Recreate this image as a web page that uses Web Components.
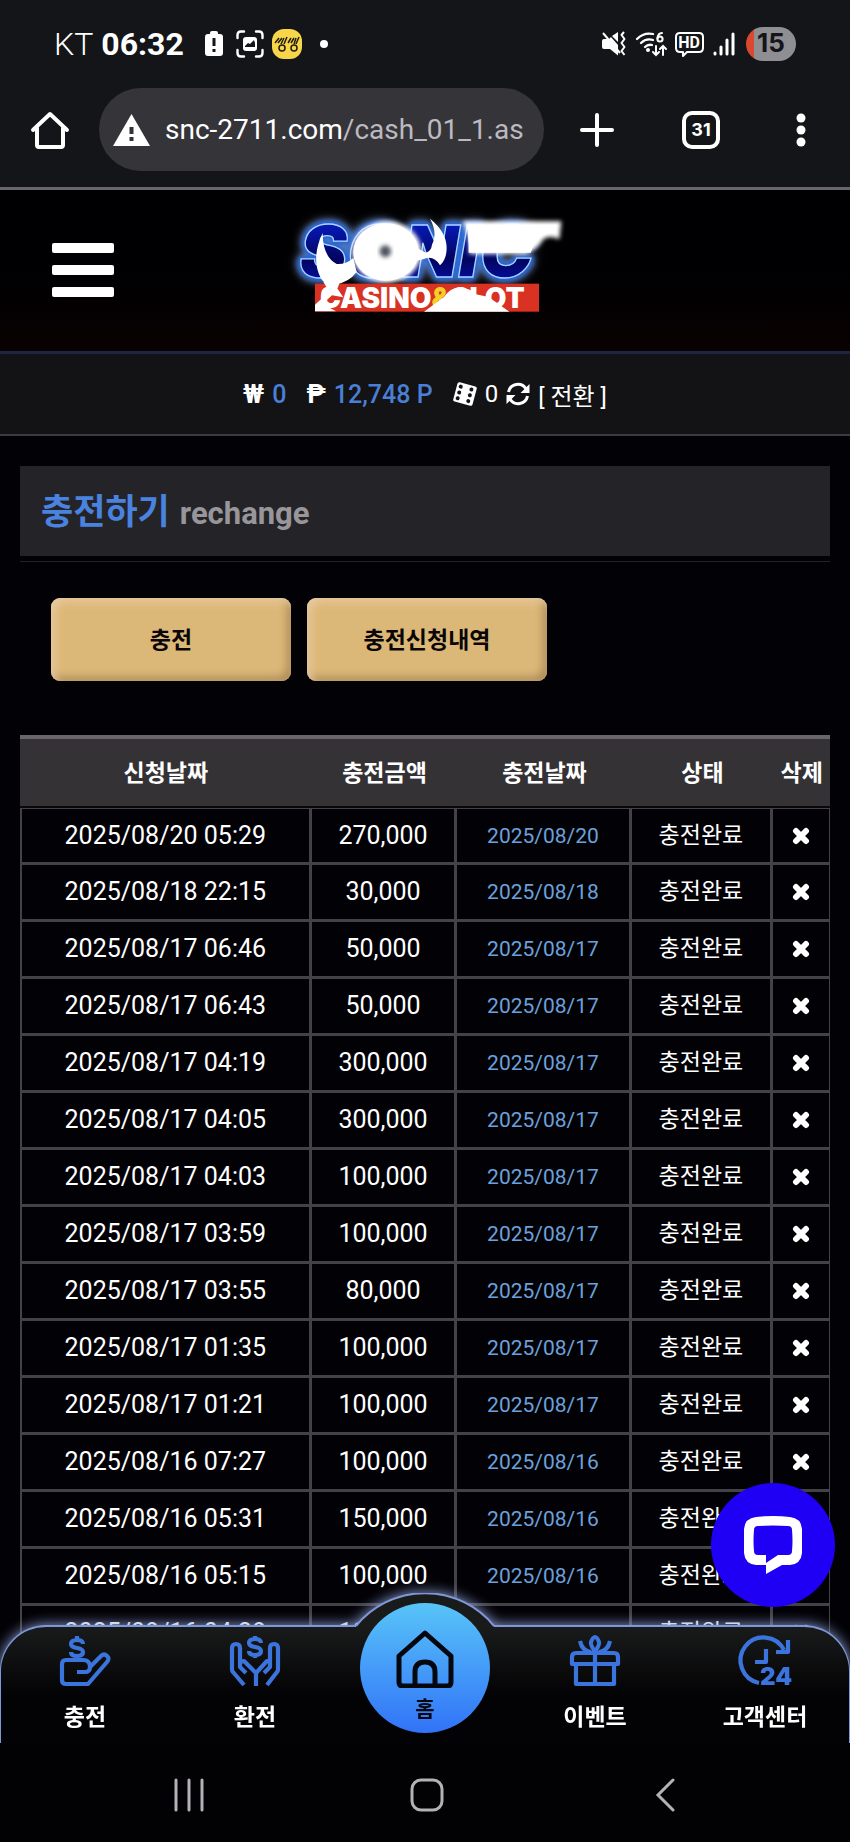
<!DOCTYPE html>
<html lang="ko">
<head>
<meta charset="utf-8">
<meta name="viewport" content="width=device-width, initial-scale=1">
<title>충전하기</title>
<style>
  html, body { margin: 0; height: 100%; background: #020105; }
  body {
    font-family: Roboto, "Noto Sans CJK KR", sans-serif;
    color: #fff;
    overflow: hidden;
  }
</style>
</head>
<body>
<phone-frame>
  <phone-status slot="top" carrier="KT" time="06:32" battery="15"></phone-status>
  <browser-bar slot="top" host="snc-2711.com" path="/cash_01_1.as" tabs="31"></browser-bar>

  <site-header></site-header>
  <wallet-bar cash="0" points="12,748 P" chips="0"></wallet-bar>
  <page-section>
    <page-title>충전하기<span slot="sub">rechange</span></page-title>
    <button-row>
      <gold-button>충전</gold-button>
      <gold-button>충전신청내역</gold-button>
    </button-row>
    <charge-table></charge-table>
  </page-section>

  <chat-bubble slot="overlay"></chat-bubble>
  <tab-bar slot="overlay">
    <tab-item icon="deposit">충전</tab-item>
    <tab-item icon="withdraw">환전</tab-item>
    <tab-item icon="home" featured>홈</tab-item>
    <tab-item icon="gift">이벤트</tab-item>
    <tab-item icon="support">고객센터</tab-item>
  </tab-bar>

  <system-nav slot="bottom"></system-nav>
</phone-frame>

<script>
/**
 * Small base class: every element renders its template once into an open root
 */
class BaseElement extends HTMLElement {
  connectedCallback() {
    if (this.shadowRoot) return;
    this.attachShadow({ mode: 'open' });
    this.shadowRoot.innerHTML = `
      <style>
        *, *::before, *::after { box-sizing: border-box; }
        :host { display: block; box-sizing: border-box; }
        svg { display: block; flex: none; }
        button {
          font: inherit;
          color: inherit;
          background: none;
          border: 0;
          padding: 0;
          margin: 0;
          cursor: pointer;
        }
        a { color: inherit; text-decoration: none; }
      </style>
      ${this.template()}
    `;
  }
}

/* Screen layout: fixed chrome on top and bottom, page in the middle */
class PhoneFrame extends BaseElement {
  template() {
    return `
      <style>
        :host { display: flex; flex-direction: column; height: 100vh; }
        .view { position: relative; flex: 1; min-height: 0; overflow: hidden; }
      </style>
      <slot name="top"></slot>
      <div class="view">
        <slot></slot>
        <slot name="overlay"></slot>
      </div>
      <slot name="bottom"></slot>
    `;
  }
}

class PhoneStatus extends BaseElement {
  template() {
    return `
      <style>
        :host {
          display: flex;
          justify-content: space-between;
          align-items: center;
          height: 88px;
          padding: 0 54px;
          background: #141519;
          font-size: 32px;
        }
        .group { display: flex; align-items: center; gap: 8px; }
        .carrier { font-weight: 300; }
        .time { font-weight: 700; }
        .battery {
          width: 50px;
          height: 34px;
          border-radius: 17px;
          background: linear-gradient(90deg, #d9482f 8px, #8f8e93 8px);
          color: #141519;
          font: 700 26px/32px Inter, sans-serif;
          text-align: center;
        }
      </style>
      <div class="group">
        <span class="carrier">${this.getAttribute('carrier')}</span>
        <span class="time">${this.getAttribute('time')}</span>
        <svg width="36" height="30" viewBox="0 0 36 30">
          <path fill="#fff" d="M18 5V4q0-2 2-2h4q2 0 2 2v1h2q3 0 3 3v16q0 3-3 3H16q-3 0-3-3V8q0-3 3-3z"/>
          <path stroke="#141519" stroke-width="3" d="M22 9v8M22 20v3"/>
        </svg>
        <svg width="28" height="28" viewBox="0 0 28 28" fill="none" stroke="#fff" stroke-width="2.4" stroke-linecap="round">
          <path d="M1.500 8V5q0-3.500 3.500-3.500h3M20 1.500h3q3.500 0 3.500 3.500v3M26.500 20v3q0 3.500-3.500 3.500h-3M8 26.500H5q-3.500 0-3.500-3.500v-3"/>
          <rect x="7" y="7" width="14" height="14" rx="3" fill="#fff" stroke="none"/>
          <path fill="#141519" stroke="none" d="M9 17v-1l3-3 2 1 4-4 1 3v4z"/>
        </svg>
        <svg width="30" height="30" viewBox="0 0 30 30" fill="none" stroke="#221d10" stroke-width="1.500">
          <rect width="30" height="30" rx="12" fill="#f7d64a" stroke="none"/>
          <circle cx="10" cy="19" r="3"/><circle cx="22" cy="19" r="3"/>
          <path d="M3 14l4-5M6 14l4-5M9 15l3-6M12 15l3-7M16 14l3-5M19 14l3-5M22 15l2-6M24 15l3-7"/>
        </svg>
        <svg width="28" height="28" viewBox="0 0 28 28"><circle cx="14" cy="14" r="4" fill="#fff"/></svg>
      </div>
      <div class="group">
        <svg width="27" height="28" viewBox="0 0 27 28">
          <path fill="#fff" d="M2 11q0-2 2-2h5l2-2 7 8v10.500L10 19H4q-2 0-2-2zM12 6l6-4v10z"/>
          <path stroke="#fff" stroke-width="2" d="M3 3l17 20"/>
          <path fill="none" stroke="#fff" stroke-width="2" stroke-linejoin="round" d="M24 2l-2.500 3 3 4-3 4 3 4-3 4 3 4"/>
        </svg>
        <svg width="32" height="28" viewBox="0 0 32 28" fill="none" stroke="#fff" stroke-width="2.300" stroke-linecap="round">
          <path d="M2 9Q9 2 18 4M6 13q5-5 12-3M10 17q3-3 7-2"/>
          <circle cx="13" cy="20" r="2" fill="#fff" stroke="none"/>
          <path stroke-width="2" d="M27 3q-4 0-4.500 5.500"/><circle cx="25" cy="9" r="2.600" stroke-width="2"/>
          <path stroke-width="2" d="M21 16v9M18 22l3 3 3-3M28 25v-9M25 19l3-3 3 3"/>
        </svg>
        <svg width="29" height="28" viewBox="0 0 29 28">
          <path fill="none" stroke="#fff" stroke-width="2" stroke-linejoin="round" d="M5 3h19q4 0 4 4v11q0 4-4 4H12l-4 4v-4H5q-4 0-4-4V7q0-4 4-4z"/>
          <text x="14" y="18" text-anchor="middle" fill="#fff" font-family="Roboto" font-weight="700" font-size="16">HD</text>
        </svg>
        <svg width="26" height="28" viewBox="0 0 26 28" stroke="#fff" stroke-width="3" stroke-linecap="round">
          <path d="M3 23v1M9 17v7M15 10v14M21 4v20"/>
        </svg>
        <span class="battery">${this.getAttribute('battery')}</span>
      </div>
    `;
  }
}

class BrowserBar extends BaseElement {
  template() {
    return `
      <style>
        :host {
          display: grid;
          grid-template-columns: 99px 1fr 106px 102px 98px;
          padding-bottom: 16px;
          background: #141519;
          border-bottom: 3px solid #69666b;
        }
        button { display: flex; align-items: center; justify-content: center; }
        .url {
          height: 83px;
          padding: 0 14px;
          gap: 15px;
          justify-content: flex-start;
          border-radius: 42px;
          background: #353439;
          font-size: 28px;
          white-space: nowrap;
        }
        .path { color: #bcbac0; }
        .count {
          width: 38px;
          height: 38px;
          border: 4px solid #fff;
          border-radius: 10px;
          font: 700 18px/30px Inter, sans-serif;
        }
      </style>
      <button aria-label="Home">
        <svg width="40" height="40" viewBox="0 0 40 40" fill="none" stroke="#fff" stroke-width="4" stroke-linejoin="round" stroke-linecap="round">
          <path d="M3 20L20 4l17 16M7 18v17q0 2 2 2h22q2 0 2-2V18"/>
        </svg>
      </button>
      <button class="url" aria-label="Address">
        <svg width="37" height="32" viewBox="0 0 37 32">
          <path fill="#fff" d="M18.500 0L37 32H0z"/>
          <path stroke="#353439" stroke-width="4" d="M18.500 13v7M18.500 23v4"/>
        </svg>
        <span>${this.getAttribute('host')}<span class="path">${this.getAttribute('path')}</span></span>
      </button>
      <button aria-label="New tab">
        <svg width="34" height="34" viewBox="0 0 34 34" stroke="#fff" stroke-width="4" stroke-linecap="round">
          <path d="M17 2v30M2 17h30"/>
        </svg>
      </button>
      <button aria-label="Tabs"><span class="count">${this.getAttribute('tabs')}</span></button>
      <button aria-label="Menu">
        <svg width="10" height="34" viewBox="0 0 10 34" fill="#fff">
          <circle cx="5" cy="5" r="4.500"/><circle cx="5" cy="17" r="4.500"/><circle cx="5" cy="29" r="4.500"/>
        </svg>
      </button>
    `;
  }
}

class SiteHeader extends BaseElement {
  template() {
    return `
      <style>
        :host {
          display: grid;
          grid-template-columns: 1fr auto 1fr;
          align-items: center;
          height: 164px;
          padding: 0 52px 2px;
          background: linear-gradient(#000002 50%, #090102);
          border-bottom: 3px solid #1d2445;
        }
        .menu { display: grid; gap: 12px; width: 62px; }
        .menu i { height: 10px; border-radius: 2px; background: #fff; }
        svg text { font-family: Inter, sans-serif; font-weight: 900; }
        .brand {
          filter: drop-shadow(0 0 5px #2a6be0) drop-shadow(0 0 6px #1f5fce)
            drop-shadow(0 0 8px #1f5fce) drop-shadow(0 0 12px #8ea6dd);
        }
      </style>
      <button class="menu" aria-label="Menu"><i></i><i></i><i></i></button>
      <a href="#" aria-label="Sonic Casino and Slot">
        <svg width="310" height="130" viewBox="0 31 930 390">
          <defs>
            <filter id="soft" x="-20%" y="-40%" width="140%" height="180%"><feGaussianBlur stdDeviation="7"/></filter>
            <linearGradient id="blue" x2="0" y2="1">
              <stop offset=".2" stop-color="#0719b8"/><stop offset=".6" stop-color="#02045e"/><stop offset="1" stop-color="#0714c8"/>
            </linearGradient>
          </defs>
          <text class="brand" x="88" y="248" font-size="216" font-style="italic" fill="url(#blue)" stroke="#a9d4ff" stroke-width="4">SONIC</text>
          <!-- white ring and claw highlights -->
          <ellipse cx="350" cy="172" rx="104" ry="92" fill="#fff" filter="url(#soft)"/>
          <ellipse cx="348" cy="172" rx="98" ry="86" fill="#fff"/>
          <ellipse cx="346" cy="170" rx="17" ry="18" fill="#50545f" filter="url(#soft)"/>
          <path fill="#fff" d="M158 115Q122 190 152 250q12 22 42 20 42-6 66-38l-10-42q-22 20-50 18-42-22-42-93z"/>
          <path fill="#fff" d="M440 160l28 14q16-6 18-24 18-34-6-78 50 40 50 88 0 34-20 52-18-30-46-20l-28 8z"/>
          <path fill="#fff" filter="url(#soft)" d="M578 80H874l-6 54q-30-14-48 0-18 30-52 44H598q2-50-20-98z"/>
          <path fill="#fff" d="M590 90H860q0 16-8 24-50 0-70 60H596q0-50-6-84z"/>
          <rect x="135" y="267" width="672" height="84" fill="#d93223"/>
          <text x="150" y="341" font-size="84" fill="#fff">CASINO<tspan fill="#f5ce28">&amp;</tspan>SLOT</text>
          <path fill="#fff" d="M160 262h50l-8 20 18 26-34-6-28 26 40 22h-63v-20l22-20q-10-26 12-34zM462 351l60-44q18-28 46-28 34 0 50 20l38 8 62 44z"/>
        </svg>
      </a>
    `;
  }
}

class WalletBar extends BaseElement {
  template() {
    return `
      <style>
        :host {
          display: flex;
          align-items: center;
          justify-content: center;
          gap: 8px;
          height: 82px;
          background: #131214;
          border-bottom: 2px solid #3d3b40;
          font-size: 24px;
        }
        b { color: #4a7fd6; font-size: 25px; font-weight: 500; margin-right: 12px; }
        .sign { font-size: 26px; font-weight: 700; }
      </style>
      <span class="sign">₩</span><b>${this.getAttribute('cash')}</b>
      <span class="sign">₱</span><b>${this.getAttribute('points')}</b>
      <svg width="24" height="24" viewBox="0 0 24 24">
        <g transform="rotate(15 12 12)">
          <rect x="2" y="2" width="20" height="20" rx="2" fill="#fff"/>
          <g fill="#131214"><circle cx="6" cy="6" r="2"/><circle cx="6" cy="12" r="2"/><circle cx="6" cy="18" r="2"/>
          <circle cx="17" cy="6" r="2"/><circle cx="17" cy="12" r="2"/><circle cx="17" cy="18" r="2"/></g>
        </g>
      </svg>
      <span>${this.getAttribute('chips')}</span>
      <svg width="24" height="24" viewBox="0 0 24 24" fill="none" stroke="#fff" stroke-width="3">
        <path d="M2.500 10A9.500 9.500 0 0 1 20 7M21.500 14A9.500 9.500 0 0 1 4 17"/>
        <path fill="#fff" stroke="none" d="M23.500 2v9h-9zM.5 22v-9h9z"/>
      </svg>
      <a href="#">[ 전환 ]</a>
    `;
  }
}

class PageSection extends BaseElement {
  template() {
    return `
      <style>:host { padding: 30px 20px 0; }</style>
      <slot></slot>
    `;
  }
}

class PageTitle extends BaseElement {
  template() {
    return `
      <style>
        :host { border-bottom: 1px solid #222125; padding-bottom: 5px; }
        h1 {
          display: flex;
          align-items: baseline;
          gap: 10px;
          height: 90px;
          margin: 0;
          padding: 4px 21px 0;
          background: #242327;
          color: #4a82df;
          font-size: 35px;
          line-height: 86px;
          font-weight: 700;
        }
        ::slotted(span) { color: #98969a; font-size: 31px; }
      </style>
      <h1><slot></slot><slot name="sub"></slot></h1>
    `;
  }
}

class ButtonRow extends BaseElement {
  template() {
    return `
      <style>
        :host { display: flex; gap: 16px; padding: 36px 31px 54px; }
      </style>
      <slot></slot>
    `;
  }
}

class GoldButton extends BaseElement {
  template() {
    return `
      <style>
        button {
          width: 240px;
          height: 83px;
          padding-bottom: 4px;
          border-radius: 9px;
          background: #dcb878;
          box-shadow: inset 4px 4px 8px #e9c9a0, inset -4px -4px 8px #a98a58;
          color: #0a0606;
          font-size: 23px;
          font-weight: 700;
        }
      </style>
      <button><slot></slot></button>
    `;
  }
}

/* Deposit history: [requested at, amount, paid on] */
const CHARGES = [
  ['2025/08/20 05:29', '270,000', '2025/08/20'],
  ['2025/08/18 22:15', '30,000', '2025/08/18'],
  ['2025/08/17 06:46', '50,000', '2025/08/17'],
  ['2025/08/17 06:43', '50,000', '2025/08/17'],
  ['2025/08/17 04:19', '300,000', '2025/08/17'],
  ['2025/08/17 04:05', '300,000', '2025/08/17'],
  ['2025/08/17 04:03', '100,000', '2025/08/17'],
  ['2025/08/17 03:59', '100,000', '2025/08/17'],
  ['2025/08/17 03:55', '80,000', '2025/08/17'],
  ['2025/08/17 01:35', '100,000', '2025/08/17'],
  ['2025/08/17 01:21', '100,000', '2025/08/17'],
  ['2025/08/16 07:27', '100,000', '2025/08/16'],
  ['2025/08/16 05:31', '150,000', '2025/08/16'],
  ['2025/08/16 05:15', '100,000', '2025/08/16'],
  ['2025/08/16 04:28', '100,000', '2025/08/16']
];

class ChargeTable extends BaseElement {
  template() {
    const rows = CHARGES.map(([requested, amount, paid]) => `
      <tr>
        <td>${requested}</td>
        <td>${amount}</td>
        <td class="paid">${paid}</td>
        <td class="state">충전완료</td>
        <td>
          <button aria-label="삭제">
            <svg width="18" height="18" viewBox="0 0 18 18" stroke="#fff" stroke-width="6" stroke-linecap="round">
              <path d="M4 4l10 10M14 4L4 14"/>
            </svg>
          </button>
        </td>
      </tr>
    `).join('');

    return `
      <style>
        table {
          width: 100%;
          table-layout: fixed;
          border-collapse: separate;
          border-spacing: 0;
          text-align: center;
          white-space: nowrap;
        }
        th {
          height: 73px;
          padding: 0 0 4px;
          background: #353236;
          border-top: 4px solid #69656a;
          border-bottom: 2px solid #0a080b;
          font-size: 23px;
          font-weight: 700;
        }
        td {
          height: 57px;
          padding: 0;
          border: solid #444246;
          border-width: 0 3px 3px 0;
          font-size: 25px;
          line-height: 30px;
        }
        td:first-child { border-left-width: 2px; }
        td:last-child { border-right-width: 1px; }
        tbody tr:first-child td { border-top-width: 1px; }
        .paid { color: #6ba1dc; font-size: 21px; }
        .state { font-size: 23px; }
        button { display: block; margin: 0 auto; }
      </style>
      <table>
        <colgroup>
          <col style="width: 36%"><col style="width: 18%"><col style="width: 21.500%">
          <col style="width: 17.500%"><col style="width: 7%">
        </colgroup>
        <thead>
          <tr><th>신청날짜</th><th>충전금액</th><th>충전날짜</th><th>상태</th><th>삭제</th></tr>
        </thead>
        <tbody>${rows}</tbody>
      </table>
    `;
  }
}

class ChatBubble extends BaseElement {
  template() {
    return `
      <style>
        :host { position: absolute; right: 15px; bottom: 136px; z-index: 1; }
        button {
          display: grid;
          place-items: center;
          width: 124px;
          height: 124px;
          border-radius: 50%;
          background: #2000f5;
        }
      </style>
      <button aria-label="Chat">
        <svg width="58" height="58" viewBox="0 0 58 58">
          <path fill="#fff" fill-rule="evenodd" d="M12 1Q29-1 46 1q11 1 12 12 1 12 0 24-1 11-12 12h-8L22 58V49H12Q1 48 0 37-1 25 0 13 1 2 12 1zM14 10q-4 0-4 4-1 11 0 21 0 4 4 4h8v8l12-8h10q4 0 4-4 1-10 0-21 0-4-4-4-15-1-30 0z"/>
        </svg>
      </button>
    `;
  }
}

class TabBar extends BaseElement {
  template() {
    return `
      <style>
        :host { position: absolute; left: 0; right: 0; bottom: 0; }
        .shape { filter: drop-shadow(0 0 7px #8fa3dc); position: absolute; inset: 0; }
        .bar {
          height: 100%;
          border: 2px solid #7f97d8;
          border-width: 2px 1px 0;
          border-radius: 46px 46px 0 0;
          background: linear-gradient(#191b1b, #030204 60%);
        }
        .bump { position: absolute; left: 50%; top: -32px; margin-left: -70px; }
        nav {
          position: relative;
          display: grid;
          grid-template-columns: repeat(5, 1fr);
          height: 118px;
        }
      </style>
      <div class="shape">
        <div class="bar"></div>
        <svg class="bump" width="140" height="35" viewBox="0 0 140 35">
          <path fill="#191b1b" d="M1 33A89 89 0 0 1 139 33V35H1z"/>
          <path fill="none" stroke="#7f97d8" stroke-width="2" d="M1 33A89 89 0 0 1 139 33"/>
        </svg>
      </div>
      <nav><slot></slot></nav>
    `;
  }
}

const TAB_ICONS = {
  deposit: `
    <path d="M6 24q-4 0-4 4v16q0 4 4 4h22L47 26q3-4 0-6-3-3-6 0L30 31q0-7-7-7zM17 36h8q5 0 5-5"/>
    <path d="M23 8q0-4-6-4t-6 4q0 3 6 4t6 4q0 4-6 4t-6-4M17 0v4M17 20v4"/>`,
  withdraw: `
    <path d="M14 49L3 36Q2 35 2 33V12q0-4 4-4t4 4v14l4-1 12 12v13M10 26v5l6 6"/>
    <path d="M37 49l10-13q1-1 1-3V12q0-4-4-4t-4 4v14l-3-1-11 12M40 26v5l-6 6"/>
    <path d="M31 7q0-4-6-4t-6 4q0 3 6 4t6 4q0 4-6 4t-6-4M25 0v3M25 19v3"/>`,
  gift: `
    <path d="M6 29v19h38V29M2 28v-7q0-4 4-4h38q4 0 4 4v7zM25 17v31"/>
    <path d="M25 16q-5-8-4-10 2-5 4-5t4 5q1 2-4 10M10 5q2 10 11 11M40 5q-2 10-11 11"/>`,
  support: `
    <path d="M19 47A23 23 0 1 1 44 14M48 4v12H36M26 13v13H15"/>`
};

class TabItem extends BaseElement {
  template() {
    if (this.hasAttribute('featured')) return this.featured();

    // the 24h icon carries its own number
    const badge = this.getAttribute('icon') === 'support'
      ? '<text x="52" y="49" text-anchor="end" stroke="none" fill="#3b74dd" font-family="Inter" font-weight="900" font-size="24">24</text>'
      : '';
    return `
      <style>
        a {
          display: flex;
          flex-direction: column;
          align-items: center;
          gap: 16px;
          padding-top: 11px;
          font-size: 23px;
          line-height: 32px;
          font-weight: 700;
          white-space: nowrap;
        }
        svg { overflow: visible; }
      </style>
      <a href="#">
        <svg width="50" height="50" viewBox="0 0 50 50" fill="none" stroke="#3b74dd" stroke-width="4.200" stroke-linejoin="round">
          ${TAB_ICONS[this.getAttribute('icon')]}${badge}
        </svg>
        <span><slot></slot></span>
      </a>
    `;
  }

  featured() {
    return `
      <style>
        :host { position: relative; }
        a {
          position: absolute;
          left: 50%;
          top: -22px;
          width: 130px;
          height: 130px;
          margin-left: -65px;
          padding-top: 27px;
          display: flex;
          flex-direction: column;
          align-items: center;
          gap: 6px;
          border-radius: 50%;
          background: linear-gradient(#58c4f8, #3173f8);
          color: #05070f;
          font-size: 21px;
          line-height: 30px;
          font-weight: 700;
        }
      </style>
      <a href="#">
        <svg width="58" height="58" viewBox="0 0 58 58" fill="none" stroke="#05070f" stroke-width="5" stroke-linejoin="round">
          <path d="M29 3L55 26v26q0 4-4 4H7q-4 0-4-4V26zM19 56V42q0-10 10-10t10 10v14"/>
        </svg>
        <span><slot></slot></span>
      </a>
    `;
  }
}

class SystemNav extends BaseElement {
  template() {
    return `
      <style>
        :host {
          display: grid;
          grid-template-columns: repeat(3, 1fr);
          height: 99px;
          padding: 4px 66px 0 70px;
          background: #020104;
        }
        button { display: grid; place-items: center; }
        svg { fill: none; stroke: #b4b2b5; stroke-width: 3; stroke-linecap: round; }
      </style>
      <button aria-label="Recents">
        <svg width="32" height="34" viewBox="0 0 32 34"><path d="M3 2v30M16 2v30M29 2v30"/></svg>
      </button>
      <button aria-label="Home">
        <svg width="34" height="34" viewBox="0 0 34 34"><rect x="2" y="2" width="30" height="30" rx="9"/></svg>
      </button>
      <button aria-label="Back">
        <svg width="20" height="34" viewBox="0 0 20 34"><path d="M18 2L3 17l15 15"/></svg>
      </button>
    `;
  }
}

customElements.define('phone-frame', PhoneFrame);
customElements.define('phone-status', PhoneStatus);
customElements.define('browser-bar', BrowserBar);
customElements.define('site-header', SiteHeader);
customElements.define('wallet-bar', WalletBar);
customElements.define('page-section', PageSection);
customElements.define('page-title', PageTitle);
customElements.define('button-row', ButtonRow);
customElements.define('gold-button', GoldButton);
customElements.define('charge-table', ChargeTable);
customElements.define('chat-bubble', ChatBubble);
customElements.define('tab-bar', TabBar);
customElements.define('tab-item', TabItem);
customElements.define('system-nav', SystemNav);
</script>
</body>
</html>
